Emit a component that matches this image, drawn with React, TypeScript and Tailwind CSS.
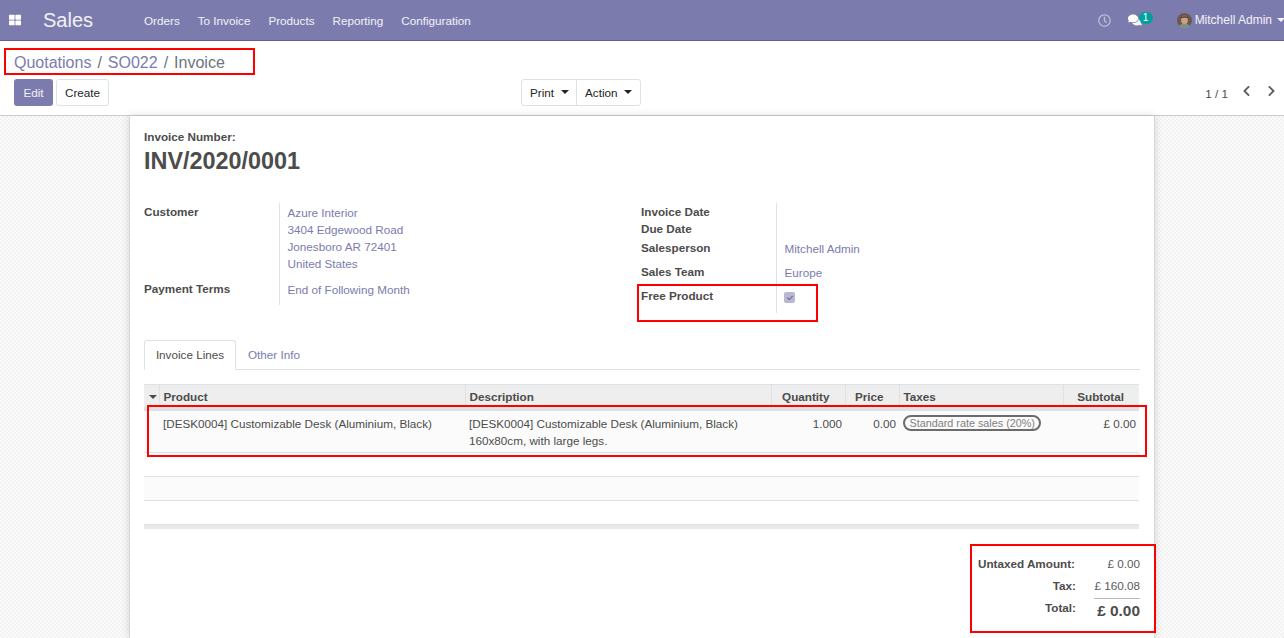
import { FaThLarge, FaRegClock, FaComments, FaChevronLeft, FaChevronRight, FaCheck } from "react-icons/fa";

function Caret({ className }: { className: string }) {
  return <span className={"inline-block w-0 h-0 border-x-[4px] border-x-transparent border-t-[4px] " + className} />;
}

function Annot({ className }: { className: string }) {
  return <div className={"absolute border-2 border-[#f00] pointer-events-none " + className} />;
}

function Row({ label, value, h, children }: { label: string; value?: string; h: string; children?: React.ReactNode }) {
  return (
    <div className={"flex " + h}>
      <div className="w-[135px] font-bold text-[#4c4c4c] shrink-0">{label}</div>
      <div className="border-l border-[#dee2e6] pl-[7.5px] grow text-[#7c7bad]">{value}{children}</div>
    </div>
  );
}

export default function App() {
  return (
    <div className="relative h-[638px] w-[1284px] overflow-hidden bg-white text-[11.7px] leading-[17px] text-[#4c4c4c] font-['Liberation_Sans',Arial,sans-serif]">
      <header className="h-[41px] bg-[#7c7bad] border-b border-[#5f5e97] flex items-center text-white/90">
        <FaThLarge className="ml-[9px] w-[12px] h-[12px] text-white" />
        <span className="ml-[22px] text-[20px] text-white/90 leading-none">Sales</span>
        <nav className="ml-[51px] flex gap-[18px] mt-px">
          <span>Orders</span>
          <span>To Invoice</span>
          <span>Products</span>
          <span>Reporting</span>
          <span>Configuration</span>
        </nav>
        <div className="ml-auto flex items-center">
          <FaRegClock className="w-[13px] h-[13px] text-white/50 mr-[17px]" />
          <div className="relative mr-[35px]">
            <FaComments className="w-[14px] h-[14px] text-white" />
            <span className="absolute left-[11px] -top-[1px] h-[12px] w-[14px] rounded-full bg-[#00a09d] text-white text-[10px] leading-[12px] text-center">1</span>
          </div>
          <svg width="15" height="15" viewBox="0 0 15 15" className="mr-[3px]">
            <circle cx="7.5" cy="7.5" r="7.5" fill="#6b5a4c" />
            <ellipse cx="7.5" cy="7" rx="3.4" ry="4.2" fill="#c99f86" />
            <path d="M2 13c2-3 9-3 11 0a7.5 7.5 0 0 1-11 0z" fill="#7f8f8a" />
            <path d="M3.6 5.5C4 2.6 11 2.6 11.4 5.5 9 4 6 4 3.6 5.5z" fill="#3d2e26" />
          </svg>
          <span className="text-[12px]">Mitchell Admin</span>
          <Caret className="ml-[5px] -mr-[1px] border-t-white/90" />
        </div>
      </header>

      <section className="h-[75px] border-b border-[#ccc] bg-white">
        <div className="pl-[14px] pt-[12px] h-[38px] text-[16px] leading-[20px] text-[#7c7bad]">
          <span>Quotations</span>
          <span className="mx-[6px] text-[#6c757d]">/</span>
          <span>SO022</span>
          <span className="mx-[6px] text-[#6c757d]">/</span>
          <span className="text-[#6c757d]">Invoice</span>
        </div>
        <div className="relative flex items-start h-[27px] px-[14px]">
          <button className="h-[27px] w-[39px] rounded-[3px] bg-[#7c7bad] text-white/90">Edit</button>
          <button className="ml-[3px] h-[27px] w-[53px] rounded-[3px] border border-[#dee2e6] bg-white text-[#212529]">Create</button>
          <div className="ml-[412px] flex h-[27px] w-[120px] rounded-[3px] border border-[#dee2e6] text-[#212529]">
            <div className="w-[55px] flex items-center pl-[8px] border-r border-[#dee2e6]">Print<Caret className="ml-[7px] mb-[2px] border-t-[#212529]" /></div>
            <div className="flex items-center pl-[8px]">Action<Caret className="ml-[7px] mb-[2px] border-t-[#212529]" /></div>
          </div>
          <div className="ml-auto flex items-center h-[27px] pt-[2px] text-[#4c4c4c]">
            <span className="mr-[13px]">1 / 1</span>
            <FaChevronLeft className="w-[11px] h-[12px] text-[#5f5f5f] mr-[14px] -mt-[5px]" />
            <FaChevronRight className="w-[11px] h-[12px] text-[#5f5f5f] -mr-[7px] -mt-[5px]" />
          </div>
        </div>
      </section>

      <main className="h-[522px] bg-[#f5f5f5] bg-[repeating-conic-gradient(#f2f2f2_0_25%,#fbfbfb_0_50%)] bg-[length:4px_4px] pl-[129px]">
        <div className="w-[1026px] h-full bg-white border-x border-[#d8d8d8] shadow-[0_0_8px_rgba(0,0,0,0.15)] pl-[14px] pr-[14px] pt-[13px]">
          <div className="font-bold leading-[15px]">Invoice Number:</div>
          <h1 className="mt-[2px] text-[23.4px] leading-[30px] font-bold text-[#4c4c4c]">INV/2020/0001</h1>

          <div className="mt-[27px] flex">
            <div className="w-[497px]">
              <Row label="Customer" h="h-[77px]">
                <div className="pt-[1px]">Azure Interior<br />3404 Edgewood Road<br />Jonesboro AR 72401<br />United States</div>
              </Row>
              <Row label="Payment Terms" h="h-[25px]"><div className="pt-[1px]">End of Following Month</div></Row>
            </div>
            <div className="w-[380px]">
              <Row label="Invoice Date" h="h-[17px]" />
              <Row label="Due Date" h="h-[19px]" />
              <Row label="Salesperson" h="h-[24px]"><div className="pt-[1px]">Mitchell Admin</div></Row>
              <Row label="Sales Team" h="h-[24px]"><div className="pt-[1px]">Europe</div></Row>
              <Row label="Free Product" h="h-[26px]">
                <span className="mt-[5px] -ml-[0.5px] flex h-[11px] w-[11px] items-center justify-center rounded-[2px] bg-[#b9b8d3]">
                  <FaCheck className="w-[6px] h-[6px] text-[#6f6ea3]" />
                </span>
              </Row>
            </div>
          </div>

          <div className="mt-[27px] flex h-[30px] border-b border-[#dee2e6]">
            <div className="h-[30px] w-[92px] pb-px border border-[#dee2e6] border-b-white rounded-t-[3px] bg-white flex items-center justify-center text-[#4c4c4c]">Invoice Lines</div>
            <div className="ml-[12px] flex items-center text-[#7c7bad]">Other Info</div>
          </div>

          <table className="mt-[14px] w-[995px] table-fixed border-collapse">
            <colgroup>
              <col className="w-[15px]" />
              <col className="w-[306px]" />
              <col className="w-[306px]" />
              <col className="w-[74px]" />
              <col className="w-[54px]" />
              <col className="w-[164px]" />
              <col className="w-[76px]" />
            </colgroup>
            <thead>
              <tr className="h-[24px] bg-[#eeeeee] border-t border-[#dee2e6] border-b-[4px] border-b-[#dee2e6] text-left font-bold leading-[15px]">
                <th className="border-r border-[#dee2e6] pl-[5px] pt-[2px]"><Caret className="mb-[2px] border-t-[#4c4c4c]" /></th>
                <th className="border-r border-[#dee2e6] pl-[4px] pt-[2px]">Product</th>
                <th className="border-r border-[#dee2e6] pl-[4px] pt-[2px]">Description</th>
                <th className="border-r border-[#dee2e6] pr-[15px] pt-[2px] text-right">Quantity</th>
                <th className="border-r border-[#dee2e6] pr-[15px] pt-[2px] text-right">Price</th>
                <th className="border-r border-[#dee2e6] pl-[4px] pt-[2px]">Taxes</th>
                <th className="pr-[15px] pt-[2px] text-right">Subtotal</th>
              </tr>
            </thead>
            <tbody>
              <tr className="h-[44px] bg-[#fbfbfb] border-b border-[#dee2e6] align-top">
                <td />
                <td className="pl-[4px] pt-[4px]">[DESK0004] Customizable Desk (Aluminium, Black)</td>
                <td className="pl-[4px] pt-[4px]">[DESK0004] Customizable Desk (Aluminium, Black)<br />160x80cm, with large legs.</td>
                <td className="pr-[3px] pt-[4px] text-right">1.000</td>
                <td className="pr-[3px] pt-[4px] text-right">0.00</td>
                <td className="pl-[4px] pt-[3px]"><span className="inline-block h-[16px] rounded-full border-2 border-[#6c6c6c] px-[4.5px] text-[10.8px] leading-[12px] text-[#808080] whitespace-nowrap">Standard rate sales (20%)</span></td>
                <td className="pr-[3px] pt-[4px] text-right">£ 0.00</td>
              </tr>
              <tr className="h-[24px] bg-white border-b border-[#dee2e6]"><td colSpan={7} /></tr>
              <tr className="h-[24px] bg-[#fcfbfc] border-b border-[#dee2e6]"><td colSpan={7} /></tr>
              <tr className="h-[24px] bg-white"><td colSpan={7} /></tr>
              <tr className="h-[4px] bg-[#e9e9eb] border-t border-[#dee2e6]"><td colSpan={7} /></tr>
            </tbody>
          </table>

          <div className="mt-[26px] flex justify-end">
            <div className="w-[162px]">
              <div className="flex h-[22px] justify-between"><span className="font-bold">Untaxed Amount:</span><span className="text-[#5a5a5a]">£ 0.00</span></div>
              <div className="flex h-[22px]"><span className="font-bold w-[98px] text-right">Tax:</span><span className="grow text-right text-[#5a5a5a]">£ 160.08</span></div>
              <div className="flex">
                <span className="font-bold w-[98px] text-right">Total:</span>
                <span className="ml-[18px] -mt-px grow border-t border-[#bbb] pt-[2px] text-right text-[15.4px] leading-[20px] font-bold">£ 0.00</span>
              </div>
            </div>
          </div>
        </div>
      </main>

      <Annot className="left-[4px] top-[48px] w-[251px] h-[27px]" />
      <Annot className="left-[637px] top-[284px] w-[181px] h-[38px]" />
      <Annot className="left-[147px] top-[405px] w-[1000px] h-[52px]" />
      <Annot className="left-[970px] top-[544px] w-[186px] h-[89px]" />
    </div>
  );
}
